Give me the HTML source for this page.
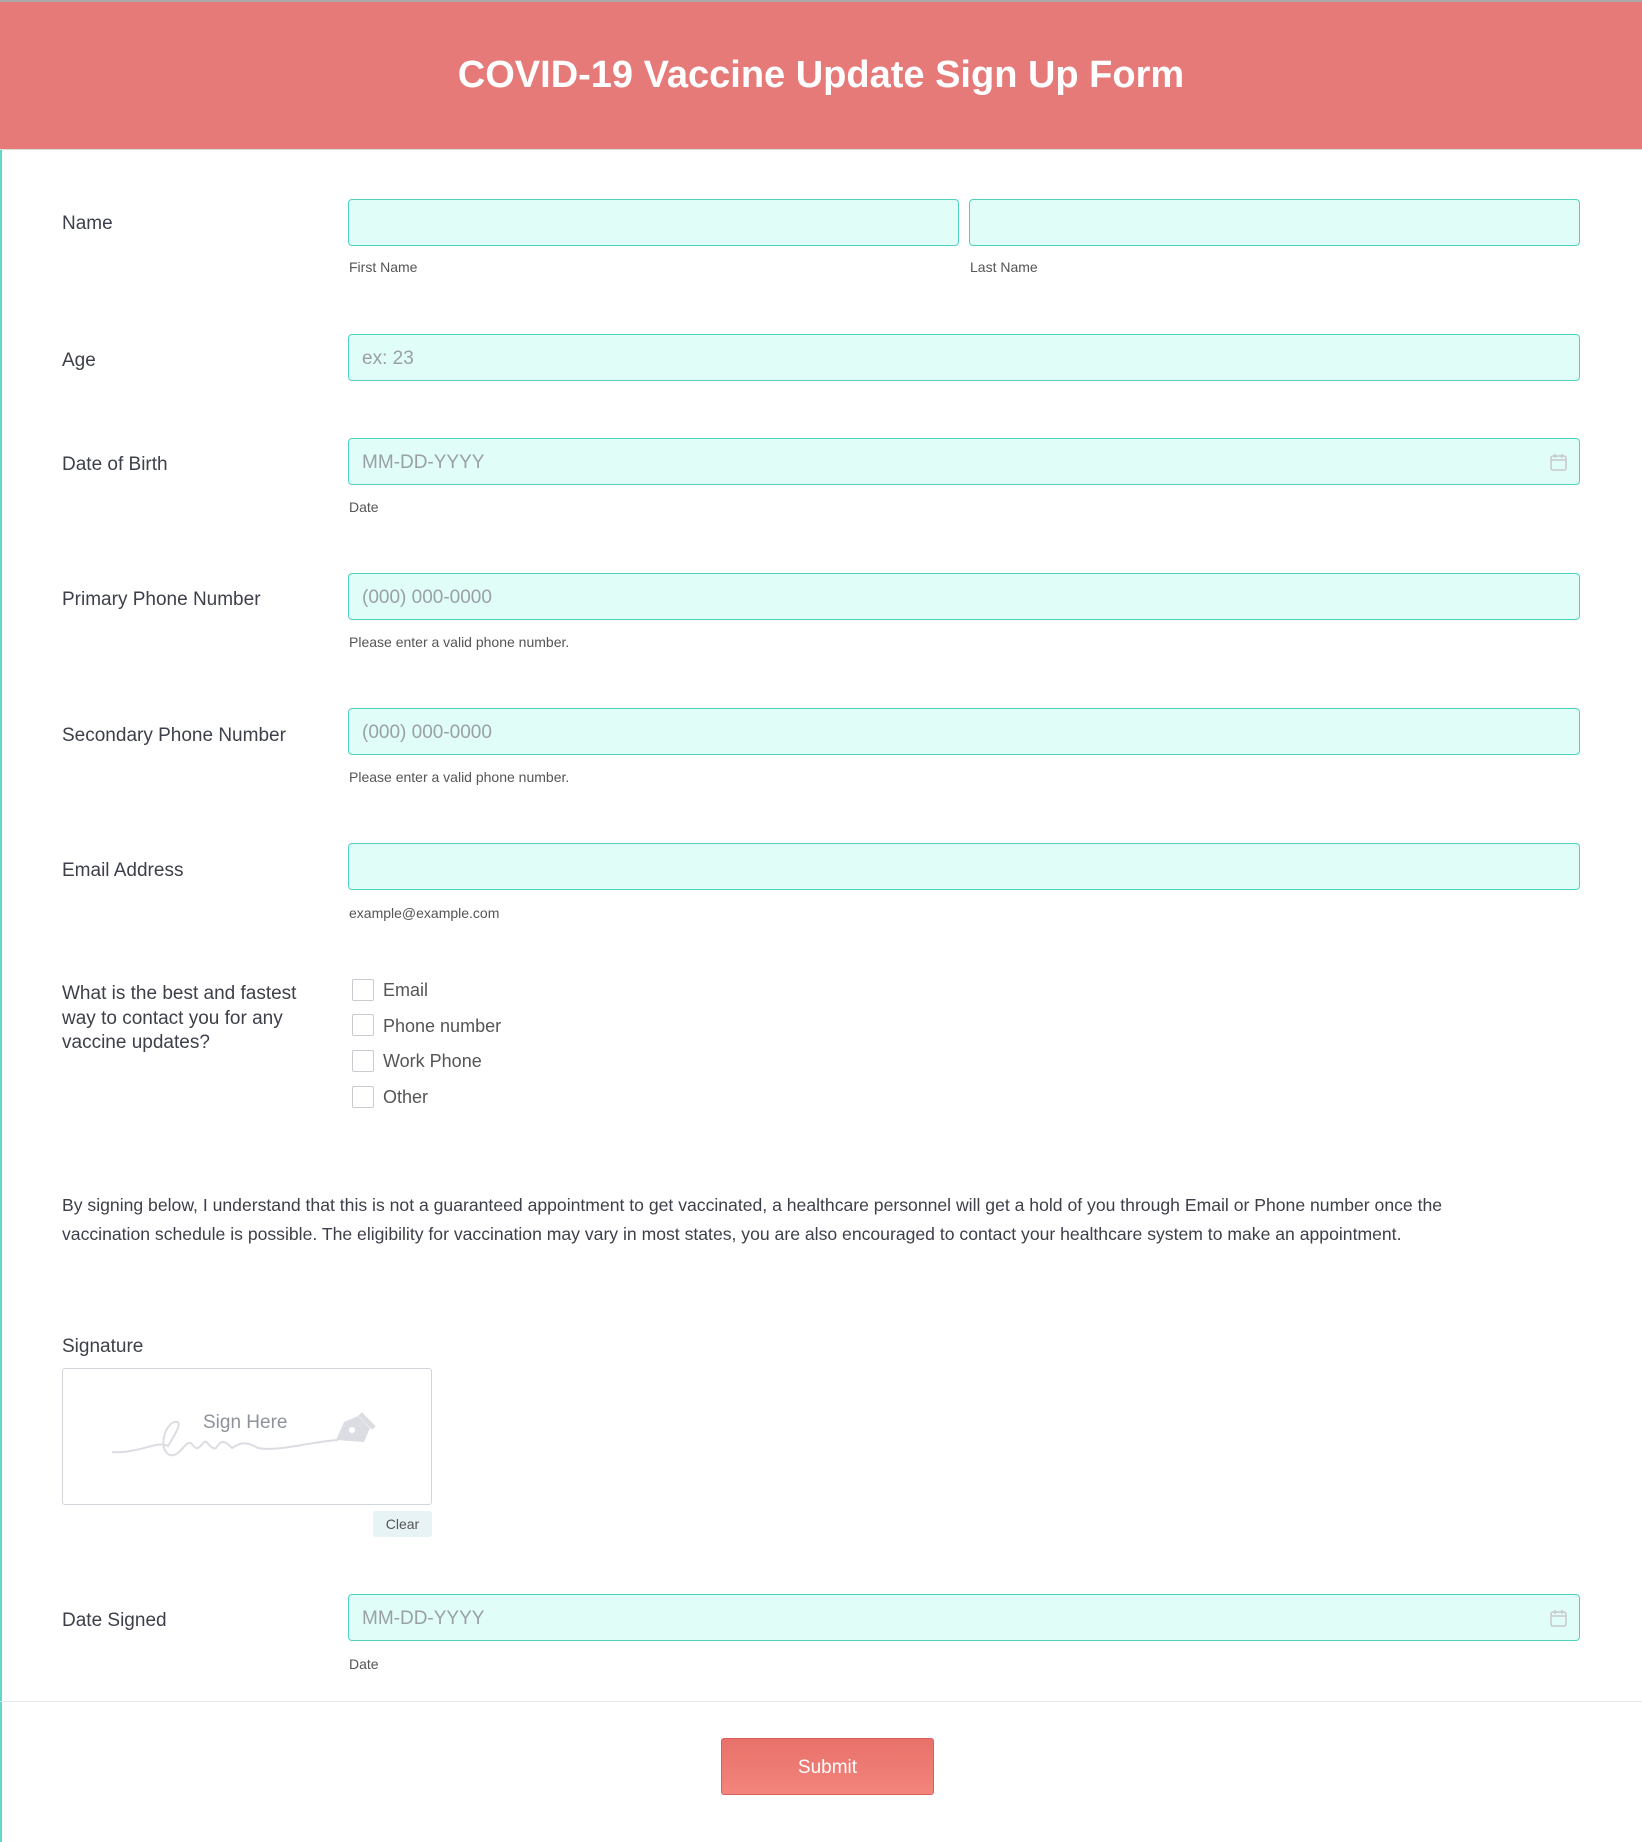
<!DOCTYPE html>
<html><head><meta charset="utf-8"><style>
*{box-sizing:border-box;margin:0;padding:0}
body{width:1642px;height:1842px;background:#fff;font-family:"Liberation Sans",sans-serif;color:#3d3f4a;position:relative;overflow:hidden}
.hdr{position:absolute;left:0;top:0;width:1642px;height:150px;background:#e57a79;border-top:2px solid #a9a9a9;border-bottom:1px solid #ddd}
.hdr h1{position:absolute;left:0;right:0;top:52px;text-align:center;color:#fff;font-size:38px;font-weight:bold}
.lb{position:absolute;border-left:2px solid #5fd8c8;left:0;top:150px;height:1692px}
.l{position:absolute;left:62px;font-size:19px;color:#3d3f4a;margin-top:3px}
.in{position:absolute;height:47px;background:#e0fdf7;border:1.5px solid #4fd1bd;border-radius:4px;font-size:19px;color:#9aa0a8;padding-left:13px;line-height:48px}
.s{position:absolute;font-size:14px;color:#555}
.cb{position:absolute;left:352px;width:22px;height:22px;border:1.5px solid #c8cbd0;border-radius:2px;background:#fff}
.ct{position:absolute;left:383px;font-size:18px;color:#555}
.cal{position:absolute;right:12px;top:14px}
</style></head><body>
<div class="hdr"><h1>COVID-19 Vaccine Update Sign Up Form</h1></div>
<div class="lb"></div>

<div class="l" style="top:210px">Name</div>
<div class="in" style="left:348px;top:199px;width:611px"></div>
<div class="in" style="left:969px;top:199px;width:611px"></div>
<div class="s" style="left:349px;top:259px">First Name</div>
<div class="s" style="left:970px;top:259px">Last Name</div>

<div class="l" style="top:347px">Age</div>
<div class="in" style="left:348px;top:334px;width:1232px">ex: 23</div>

<div class="l" style="top:451px">Date of Birth</div>
<div class="in" style="left:348px;top:438px;width:1232px">MM-DD-YYYY<svg class="cal" width="17" height="18" viewBox="0 0 17 18"><rect x="1" y="3" width="15" height="14" rx="2" fill="none" stroke="#c8c8cc" stroke-width="1.5"/><path d="M1 7h15M5 1v4M12 1v4" stroke="#c8c8cc" stroke-width="1.5"/></svg></div>
<div class="s" style="left:349px;top:499px">Date</div>

<div class="l" style="top:586px">Primary Phone Number</div>
<div class="in" style="left:348px;top:573px;width:1232px">(000) 000-0000</div>
<div class="s" style="left:349px;top:634px">Please enter a valid phone number.</div>

<div class="l" style="top:722px">Secondary Phone Number</div>
<div class="in" style="left:348px;top:708px;width:1232px">(000) 000-0000</div>
<div class="s" style="left:349px;top:769px">Please enter a valid phone number.</div>

<div class="l" style="top:857px">Email Address</div>
<div class="in" style="left:348px;top:843px;width:1232px"></div>
<div class="s" style="left:349px;top:905px">example@example.com</div>

<div class="l" style="top:979px;line-height:24.6px;width:270px">What is the best and fastest way to contact you for any vaccine updates?</div>
<div class="cb" style="top:979px"></div><div class="ct" style="top:980px">Email</div>
<div class="cb" style="top:1014px"></div><div class="ct" style="top:1016px">Phone number</div>
<div class="cb" style="top:1050px"></div><div class="ct" style="top:1051px">Work Phone</div>
<div class="cb" style="top:1086px"></div><div class="ct" style="top:1087px">Other</div>

<div class="l" style="top:1188px;font-size:17.6px;line-height:28.5px;width:1420px">By signing below, I understand that this is not a guaranteed appointment to get vaccinated, a healthcare personnel will get a hold of you through Email or Phone number once the vaccination schedule is possible. The eligibility for vaccination may vary in most states, you are also encouraged to contact your healthcare system to make an appointment.</div>

<div class="l" style="top:1333px">Signature</div>
<div style="position:absolute;left:62px;top:1368px;width:370px;height:137px;border:1.5px solid #d3d5da;border-radius:3px"></div>
<div style="position:absolute;left:203px;top:1412px;font-size:19px;color:#8d929c">Sign Here</div>
<svg style="position:absolute;left:108px;top:1410px" width="280" height="60" viewBox="0 0 280 60"><path d="M4 42 C30 44,50 30,60 36 C70 20,75 10,66 12 C56 16,50 40,62 45 C72 48,78 28,84 34 C88 40,90 40,96 32 C100 30,102 40,108 38 C114 28,118 32,124 38 C130 34,136 30,150 38 C170 42,200 32,230 30" fill="none" stroke="#dcdde2" stroke-width="2"/><path d="M228 30 L236 12 L250 6 L262 18 L256 32 Z" fill="#dcdde2"/><circle cx="244" cy="20" r="3" fill="#fff"/><path d="M252 4 L266 18" stroke="#dcdde2" stroke-width="5"/></svg>
<div style="position:absolute;left:373px;top:1511px;width:59px;height:26px;background:#e8f3f5;border-radius:3px;font-size:14px;color:#555;text-align:center;line-height:26px">Clear</div>

<div class="l" style="top:1607px">Date Signed</div>
<div class="in" style="left:348px;top:1594px;width:1232px">MM-DD-YYYY<svg class="cal" width="17" height="18" viewBox="0 0 17 18"><rect x="1" y="3" width="15" height="14" rx="2" fill="none" stroke="#c8c8cc" stroke-width="1.5"/><path d="M1 7h15M5 1v4M12 1v4" stroke="#c8c8cc" stroke-width="1.5"/></svg></div>
<div class="s" style="left:349px;top:1656px">Date</div>

<div style="position:absolute;left:0;top:1701px;width:1642px;height:1px;background:#e6e7ea"></div>
<div style="position:absolute;left:721px;top:1738px;width:213px;height:57px;background:linear-gradient(#e8716a,#f2857c);border:1px solid #d9605a;border-radius:3px;color:#fff;font-size:19px;text-align:center;line-height:57px">Submit</div>
</body></html>
